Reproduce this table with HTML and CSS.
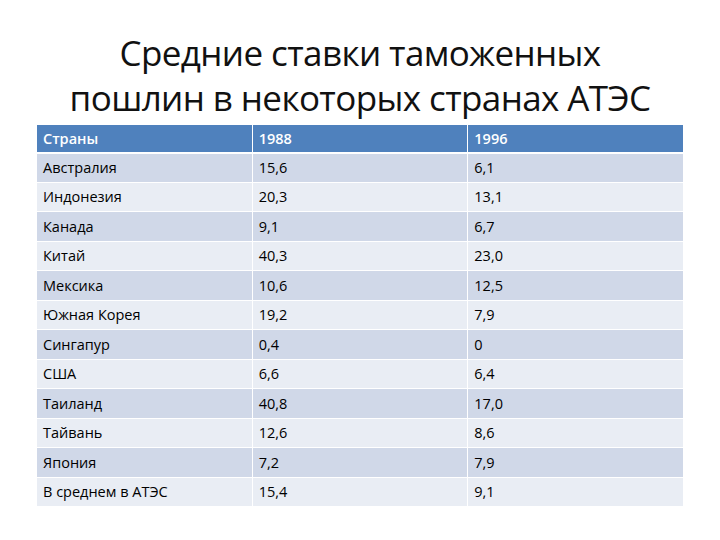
FILE: index.html
```html
<!DOCTYPE html>
<html lang="ru">
<head>
<meta charset="utf-8">
<link rel="stylesheet" href="styles.css">
</head>
<body>
<div class="slide">
  <h1 class="title">Средние ставки таможенных<br>пошлин в некоторых странах АТЭС</h1>
  <table class="data">
    <thead>
      <tr><th>Страны</th><th>1988</th><th>1996</th></tr>
    </thead>
    <tbody>
      <tr><td>Австралия</td><td>15,6</td><td>6,1</td></tr>
      <tr><td>Индонезия</td><td>20,3</td><td>13,1</td></tr>
      <tr><td>Канада</td><td>9,1</td><td>6,7</td></tr>
      <tr><td>Китай</td><td>40,3</td><td>23,0</td></tr>
      <tr><td>Мексика</td><td>10,6</td><td>12,5</td></tr>
      <tr><td>Южная Корея</td><td>19,2</td><td>7,9</td></tr>
      <tr><td>Сингапур</td><td>0,4</td><td>0</td></tr>
      <tr><td>США</td><td>6,6</td><td>6,4</td></tr>
      <tr><td>Таиланд</td><td>40,8</td><td>17,0</td></tr>
      <tr><td>Тайвань</td><td>12,6</td><td>8,6</td></tr>
      <tr><td>Япония</td><td>7,2</td><td>7,9</td></tr>
      <tr><td>В среднем в АТЭС</td><td>15,4</td><td>9,1</td></tr>
    </tbody>
  </table>
</div>
</body>
</html>
```
FILE: styles.css
```css
html, body {
  margin: 0;
  padding: 0;
  background: #ffffff;
}
.slide {
  width: 720px;
  height: 540px;
  box-sizing: border-box;
  padding-top: 30px;
  font-family: "Open Sans", "Noto Sans", sans-serif;
}
.title {
  margin: 0;
  text-align: center;
  font-weight: 400;
  font-size: 35px;
  line-height: 45px;
  color: #111;
  letter-spacing: -0.6px;
}
.data {
  margin: 4px 0 0 36px;
  width: 648px;
  border-collapse: collapse;
  table-layout: fixed;
  font-size: 14.5px;
}
.data th, .data td {
  text-align: left;
  padding: 0 6px;
  border: 1px solid #ffffff;
  height: 28px;
  box-sizing: border-box;
}
.data th {
  background: #4f81bd;
  color: #ffffff;
  font-weight: 600;
  border-bottom: 2px solid #ffffff;
}
.data tbody tr:nth-child(odd) td {
  background: #d0d8e8;
}
.data tbody tr:nth-child(even) td {
  background: #e9edf4;
}
.data td {
  color: #000;
  height: 29.5px;
}
```
